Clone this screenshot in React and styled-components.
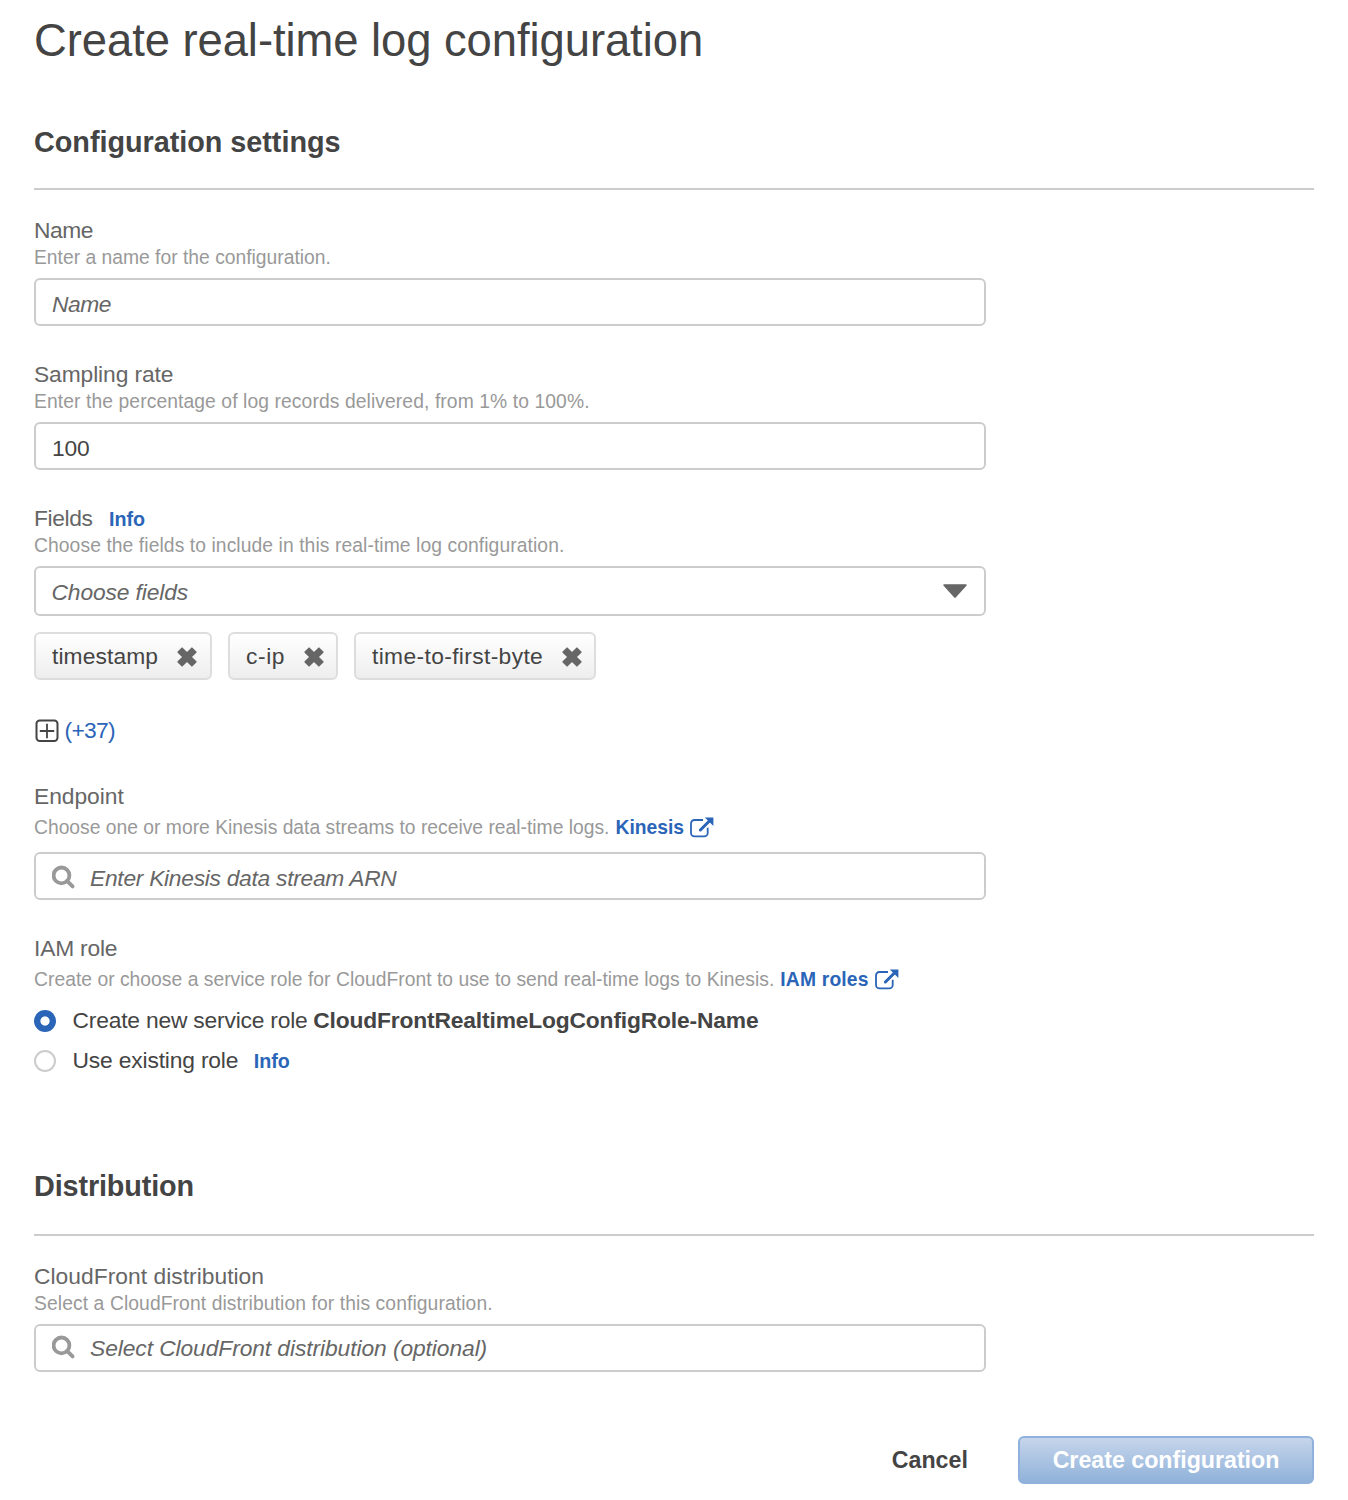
import React from 'react';
import styled, { createGlobalStyle, css } from 'styled-components';

const GlobalStyle = createGlobalStyle`
  * { box-sizing: border-box; }
  body {
    margin: 0;
    background: #fff;
    color: #444;
    font-family: "Liberation Sans", Arial, sans-serif;
    font-size: 22.8px;
  }
`;

const Page = styled.main`
  width: 1348px;
  height: 1500px;
  padding: 14px 34px 0;
  overflow: hidden;
`;

const Title = styled.h1`
  margin: 0 0 56px;
  font-size: 45.4px;
  font-weight: 400;
  line-height: 54px;
  letter-spacing: -0.06px;
`;

const SectionTitle = styled.h2`
  margin: ${(p) => p.$top || 0}px 0 26px;
  padding-bottom: ${(p) => p.$gap}px;
  border-bottom: 2px solid #ccc;
  font-size: 28.8px;
  font-weight: 700;
  line-height: 36px;
  letter-spacing: ${(p) => p.$ls}px;
`;

const Field = styled.div`
  width: 952px;
  margin-bottom: ${(p) => p.$bottom ?? 34}px;
`;

const Label = styled.div`
  display: flex;
  gap: 16.5px;
  height: 28px;
  color: #666;
  line-height: 28px;
  letter-spacing: ${(p) => p.$ls || 0}px;
  white-space: nowrap;
`;

const Hint = styled.div`
  display: flex;
  align-items: center;
  height: ${(p) => (p.$tall ? 36 : 28)}px;
  margin-bottom: 6px;
  color: #999;
  font-size: 19.3px;
  line-height: ${(p) => (p.$tall ? 36 : 28)}px;
  letter-spacing: ${(p) => p.$ls || 0}px;
  white-space: nowrap;
`;

const Link = styled.a`
  display: inline-flex;
  align-items: center;
  gap: 6px;
  margin-left: ${(p) => p.$left || 0}px;
  padding-top: ${(p) => p.$drop || 0}px;
  color: #2a65b8;
  font-size: ${(p) => p.$size || 19.3}px;
  font-weight: 700;
  letter-spacing: ${(p) => p.$ls || 0}px;
  cursor: pointer;
`;

const Box = styled.div`
  display: flex;
  align-items: center;
  width: 100%;
  height: ${(p) => p.$height || 48}px;
  padding: ${(p) => p.$drop || 0}px 17px 0 16px;
  border: 2px solid #ccc;
  border-radius: 6px;
  background: #fff;
  color: #666;

  > svg { flex: none; }
`;

const Input = styled.input`
  flex: 1;
  min-width: 0;
  height: 28px;
  margin-left: ${(p) => p.$left || 0}px;
  padding: 0;
  border: 0;
  outline: 0;
  background: transparent;
  color: #444;
  font: inherit;
  line-height: 28px;
  letter-spacing: ${(p) => p.$ls || 0}px;

  &::placeholder {
    color: #666;
    font-style: italic;
    opacity: 1;
  }
`;

const SelectText = styled.span`
  flex: 1;
  margin-left: -0.5px;
  font-style: italic;
  line-height: 28px;
  letter-spacing: -0.12px;
`;

const Chips = styled.div`
  display: flex;
  gap: 16px;
  margin-top: 16px;
`;

const Chip = styled.div`
  display: flex;
  align-items: center;
  justify-content: space-between;
  width: ${(p) => p.$width}px;
  height: 48px;
  padding: 0 ${(p) => p.$right}px 0 16px;
  border: 2px solid #ddd;
  border-radius: 6px;
  background: linear-gradient(#fff, #eee);
  letter-spacing: ${(p) => p.$ls}px;
  white-space: nowrap;
`;

const More = styled.div`
  display: flex;
  align-items: center;
  gap: 5.5px;
  height: 28px;
  margin: 36px 0 38px;
  padding-left: 1px;
  color: #2a65b8;
  line-height: 28px;
  letter-spacing: -0.7px;
`;

const Radios = styled.div`
  display: flex;
  flex-direction: column;
  margin-top: -4px;
`;

const Option = styled.label`
  display: flex;
  align-items: center;
  height: 40px;
  line-height: 28px;
  white-space: pre;
`;

const Dot = styled.span`
  width: 22px;
  height: 22px;
  margin: 1px 16.5px 0 0;
  border: 2px solid #ccc;
  border-radius: 50%;
  background: #fff;
  ${(p) => p.$on && css`
    border: 0;
    background: radial-gradient(circle, #fff 4.2px, #2a65b8 5px);
  `}
`;

const OptionText = styled.span`
  margin-top: -1px;
  letter-spacing: ${(p) => p.$ls}px;
`;

const RoleName = styled.strong`
  margin: -1px 0 0 5.7px;
  letter-spacing: -0.16px;
`;

const Footer = styled.footer`
  display: flex;
  justify-content: flex-end;
  align-items: center;
  gap: 50px;
  margin-top: 64px;
`;

const Button = styled.button`
  height: 48px;
  padding: 0;
  border: 0;
  background: none;
  color: #444;
  font: inherit;
  font-size: 23.2px;
  font-weight: 700;
  letter-spacing: 0.05px;

  ${(p) => p.$primary && css`
    width: 296px;
    border: 2px solid #8fb1db;
    border-radius: 6px;
    background: linear-gradient(#c6d5eb, #90b2da);
    color: #fff;
    letter-spacing: 0;
  `}
`;

const SearchIcon = () => (
  <svg width="24" height="26" viewBox="0 0 24 26" fill="none" stroke="#999">
    <circle cx="9.5" cy="10.4" r="7.9" strokeWidth="3.8" />
    <path d="M15 15.8 20.6 21.4" strokeWidth="3.8" strokeLinecap="round" />
  </svg>
);

const ExternalIcon = () => (
  <svg width="24" height="22" viewBox="0 0 24 22" fill="none" stroke="#2a65b8">
    <path d="M13 3H4.4A3.4 3.4 0 0 0 1 6.4V16a3.4 3.4 0 0 0 3.4 3.4h9.9a3.4 3.4 0 0 0 3.4-3.4v-5.2" strokeWidth="1.8" />
    <path d="M10.4 13 19.4 4" strokeWidth="3" strokeLinecap="round" />
    <path d="M14.8 .4h8.6v8.6Z" fill="#2a65b8" stroke="none" />
  </svg>
);

const RemoveIcon = () => (
  <svg width="22" height="22" viewBox="0 0 22 22">
    <path
      d="M6.1 3.2 11 8.1l4.9-4.9 3.9 3.9-4.9 4.9 4.9 4.9-3.9 3.9L11 15.9l-4.9 4.9-3.9-3.9L7.1 12 2.2 7.1Z"
      fill="#666"
      stroke="#666"
      strokeWidth="1.6"
      strokeLinejoin="round"
    />
  </svg>
);

const PlusBoxIcon = () => (
  <svg width="24" height="24" viewBox="0 0 24 24" fill="none" stroke="#444">
    <rect x="1.5" y="2.5" width="21" height="20.5" rx="3.2" strokeWidth="2" />
    <path d="M12 5.8v14.4M4.8 13h14.4" strokeWidth="1.8" />
  </svg>
);

const CaretIcon = () => (
  <svg width="24" height="16" viewBox="0 0 24 16">
    <path d="M1.2 .2h21.6q1.5.4.6 1.6L13 13.2q-1 1-2 0L.6 1.8Q-.3.6 1.2 .2Z" fill="#666" />
  </svg>
);

const chips = [
  { name: 'timestamp', width: 178, right: 12, ls: 0.1 },
  { name: 'c-ip', width: 110, right: 11, ls: 0.6 },
  { name: 'time-to-first-byte', width: 242, right: 11, ls: 0.36 },
];

export default function App() {
  return (
    <>
      <GlobalStyle />
      <Page>
        <Title>Create real-time log configuration</Title>

        <SectionTitle $gap={28} $ls={-0.03}>Configuration settings</SectionTitle>

        <Field>
          <Label $ls={-0.5}>Name</Label>
          <Hint>Enter a name for the configuration.</Hint>
          <Box $drop={4}><Input placeholder="Name" $ls={-0.5} /></Box>
        </Field>

        <Field>
          <Label $ls={-0.1}>Sampling rate</Label>
          <Hint $ls={0.092}>Enter the percentage of log records delivered, from 1% to 100%.</Hint>
          <Box $drop={4}><Input defaultValue="100" $ls={-0.2} /></Box>
        </Field>

        <Field $bottom={0}>
          <Label $ls={-0.38}>
            Fields
            <Link $size={19.7} $drop={1}>Info</Link>
          </Label>
          <Hint $ls={0.08}>Choose the fields to include in this real-time log configuration.</Hint>
          <Box $height={50} $drop={2}>
            <SelectText>Choose fields</SelectText>
            <CaretIcon />
          </Box>
          <Chips>
            {chips.map((c) => (
              <Chip key={c.name} $width={c.width} $right={c.right} $ls={c.ls}>
                {c.name}
                <RemoveIcon />
              </Chip>
            ))}
          </Chips>
          <More><PlusBoxIcon />(+37)</More>
        </Field>

        <Field>
          <Label $ls={-0.04}>Endpoint</Label>
          <Hint $tall>
            Choose one or more Kinesis data streams to receive real-time logs.
            <Link $left={6}>Kinesis<ExternalIcon /></Link>
          </Hint>
          <Box $drop={4}>
            <SearchIcon />
            <Input $left={14} $ls={-0.28} placeholder="Enter Kinesis data stream ARN" />
          </Box>
        </Field>

        <Field $bottom={0}>
          <Label $ls={-0.2}>IAM role</Label>
          <Hint $tall $ls={0.022}>
            Create or choose a service role for CloudFront to use to send real-time logs to Kinesis.
            <Link $left={6} $ls={0.17}>IAM roles<ExternalIcon /></Link>
          </Hint>
          <Radios>
            <Option>
              <Dot $on />
              <OptionText $ls={-0.19}>Create new service role</OptionText>
              <RoleName>CloudFrontRealtimeLogConfigRole-Name</RoleName>
            </Option>
            <Option>
              <Dot />
              <OptionText $ls={-0.16}>Use existing role</OptionText>
              <Link $left={15.5} $size={19.7} $drop={1}>Info</Link>
            </Option>
          </Radios>
        </Field>

        <SectionTitle $top={88} $gap={30} $ls={-0.13}>Distribution</SectionTitle>

        <Field $bottom={0}>
          <Label $ls={0.03}>CloudFront distribution</Label>
          <Hint $ls={0.095}>Select a CloudFront distribution for this configuration.</Hint>
          <Box>
            <SearchIcon />
            <Input $left={14} $ls={-0.08} placeholder="Select CloudFront distribution (optional)" />
          </Box>
        </Field>

        <Footer>
          <Button>Cancel</Button>
          <Button $primary>Create configuration</Button>
        </Footer>
      </Page>
    </>
  );
}
